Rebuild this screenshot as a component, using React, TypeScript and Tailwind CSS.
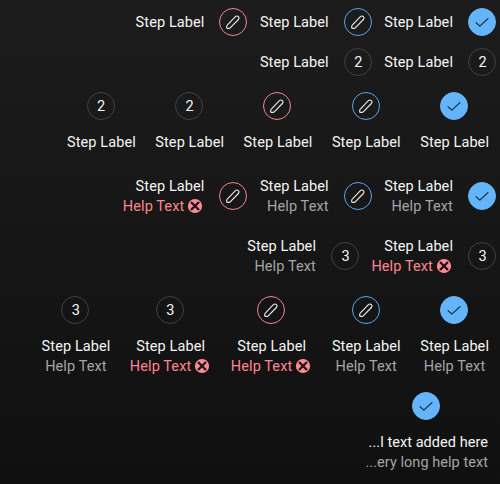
type Kind = 'error' | 'edit' | 'done' | '2' | '3';
type StepData = { kind: Kind; help?: boolean; error?: boolean };

function Pencil() {
  return (
    <svg width="16" height="16" viewBox="0 0 16 16" fill="none" stroke="#e9e9e9" strokeWidth="1.15" strokeLinejoin="round">
      <path d="M2.3 11.1 10.4 2.6a2.1 2.1 0 0 1 3 0 2.1 2.1 0 0 1 0 2.9L5.2 13.9a1.5 1.5 0 0 1-1 .5H2.7a1 1 0 0 1-1-1v-1.2a1.6 1.6 0 0 1 .6-1.1Z" />
    </svg>
  );
}

function Check() {
  return (
    <svg width="16" height="16" viewBox="0 0 16 16" fill="none" stroke="#15222e" strokeWidth="1.1" strokeLinecap="round" strokeLinejoin="round">
      <path d="m2 8.6 3.8 3.5 8.2-7.5" />
    </svg>
  );
}

function ErrorIcon() {
  return (
    <svg className="shrink-0" width="16" height="16" viewBox="0 0 16 16">
      <circle cx="8" cy="8" r="7.1" fill="#ff8a93" />
      <path d="m4 4 8 8m0-8-8 8" fill="none" stroke="#161616" strokeWidth="2.3" />
    </svg>
  );
}

const ring: Record<Kind, string> = {
  error: 'border-[#f58590]',
  edit: 'border-[#5aa5ea]',
  done: 'border-[#64b4fa] bg-[#64b4fa]',
  '2': 'border-[#414141]',
  '3': 'border-[#414141]',
};

function Indicator({ kind }: { kind: Kind }) {
  return (
    <div className={`flex size-7 shrink-0 items-center justify-center rounded-full border ${ring[kind]}`}>
      {kind === 'done' ? <Check /> : kind === 'error' || kind === 'edit' ? <Pencil /> : <span className="h-5 pl-px">{kind}</span>}
    </div>
  );
}

function Help({ error }: { error?: boolean }) {
  return (
    <div className={`flex h-5 items-center gap-1 ${error ? 'text-[#ff858f]' : 'text-[#a5a5a5]'}`}>
      <span className="h-5 w-[61px] pl-[0.4px] tracking-[0.1px]">Help Text</span>
      {error && <ErrorIcon />}
    </div>
  );
}

function HStep({ kind, help, error }: StepData) {
  return (
    <div className="flex items-center gap-4 pl-2">
      <div className="flex flex-col items-end">
        <span className="h-5 w-[68.3px] pl-[0.5px] tracking-[0.1px]">Step Label</span>
        {help && <Help error={error} />}
      </div>
      <Indicator kind={kind} />
    </div>
  );
}

function VStep({ kind, help, error }: StepData) {
  return (
    <div className="flex flex-col items-center px-2">
      <Indicator kind={kind} />
      <span className="mt-3 h-5 w-[68.3px] pl-[0.5px] tracking-[0.1px]">Step Label</span>
      {help && <Help error={error} />}
    </div>
  );
}

export default function App() {
  return (
    <main className="h-[484px] w-[500px] overflow-hidden bg-linear-to-b from-[#1c1c1c] to-[#101010] pr-1 font-['Roboto',sans-serif] text-[14.5px] leading-[22px] whitespace-nowrap text-[#f5f5f5]">
      <div className="flex h-11 items-center justify-end gap-1">
        <HStep kind="error" />
        <HStep kind="edit" />
        <HStep kind="done" />
      </div>
      <div className="flex h-9 items-center justify-end gap-1">
        <HStep kind="2" />
        <HStep kind="2" />
      </div>
      <div className="mt-3 flex justify-end gap-1">
        <VStep kind="2" />
        <VStep kind="2" />
        <VStep kind="error" />
        <VStep kind="edit" />
        <VStep kind="done" />
      </div>
      <div className="mt-6 flex justify-end gap-1">
        <HStep kind="error" help error />
        <HStep kind="edit" help />
        <HStep kind="done" help />
      </div>
      <div className="mt-5 flex justify-end gap-1">
        <HStep kind="3" help />
        <HStep kind="3" help error />
      </div>
      <div className="mt-5 flex justify-end gap-1">
        <VStep kind="3" help />
        <VStep kind="3" help error />
        <VStep kind="error" help error />
        <VStep kind="edit" help />
        <VStep kind="done" help />
      </div>
      <div className="mt-4 flex justify-end">
        <div className="flex w-[140px] flex-col items-center px-2">
          <Indicator kind="done" />
          <span className="mt-3 h-5 self-end tracking-[0.05px]">...l text added here</span>
          <span className="h-5 self-end tracking-[0.05px] text-[#a5a5a5]">...ery long help text</span>
        </div>
      </div>
    </main>
  );
}
